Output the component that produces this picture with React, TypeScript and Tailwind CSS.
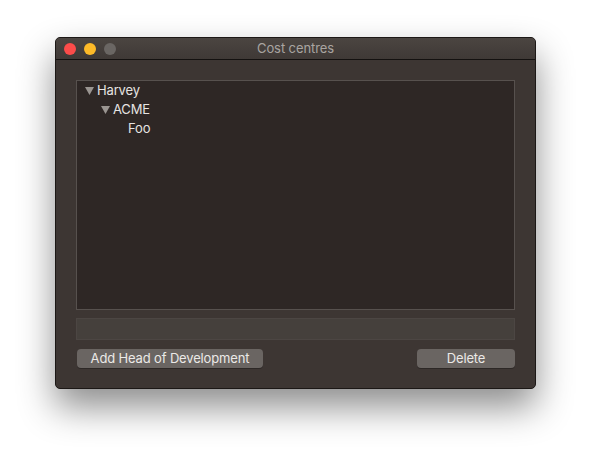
import React from "react";

const font = { fontFamily: '"Inter", "Liberation Sans", sans-serif' };

function Disclosure() {
    return (
        <svg width="9" height="8" viewBox="0 0 9 8" className="shrink-0">
            <path d="M0 0 L9 0 L4.5 8 Z" fill="#9a9591" />
        </svg>
    );
}

export default function App() {
    return (
        <div className="w-[592px] h-[463px] bg-white pl-[55px] pt-[37px]" style={font}>
            <div className="w-[481px] h-[352px] flex flex-col rounded-[5px] border border-[#1c1816] bg-[#3d3633] shadow-[0_18px_36px_rgba(0,0,0,0.45)] overflow-hidden">
                {/* title bar */}
                <div className="relative h-[22px] flex items-center bg-gradient-to-b from-[#4b4541] to-[#3f3936] border-b border-[#141110]">
                    <div className="flex items-center gap-[8px] pl-[8px]">
                        <span className="w-[12px] h-[12px] rounded-full bg-[#fc4c4a]" />
                        <span className="w-[12px] h-[12px] rounded-full bg-[#fdba28]" />
                        <span className="w-[12px] h-[12px] rounded-full bg-[#6a6663]" />
                    </div>
                    <div className="absolute inset-0 flex items-center justify-center text-[13px] tracking-[-0.1px] text-[#a9a5a1]">
                        Cost centres
                    </div>
                </div>

                {/* content */}
                <div className="flex-1 flex flex-col px-[20px] pt-[20px]">
                    <div className="h-[230px] border border-[#57514e] bg-[#2e2725] text-[13px] tracking-[-0.15px] text-[#e6e4e2]">
                        <div className="h-[19px] flex items-center gap-[3px] pl-[8px]">
                            <Disclosure />
                            <span>Harvey</span>
                        </div>
                        <div className="h-[19px] flex items-center gap-[3px] pl-[24px]">
                            <Disclosure />
                            <span>ACME</span>
                        </div>
                        <div className="h-[19px] flex items-center pl-[51px]">
                            <span>Foo</span>
                        </div>
                    </div>

                    <div className="mt-[8px] h-[22px] border border-[#4c4643] bg-[#45403c]" />

                    <div className="mt-[9px] flex justify-between text-[13px] tracking-[-0.15px]">
                        <button className="ml-[1px] w-[186px] h-[19px] rounded-[4px] bg-[#6a6562] leading-none text-[#ebe9e7] shadow-[0_1px_0_rgba(0,0,0,0.25)]">
                            Add Head of Development
                        </button>
                        <button className="w-[98px] h-[19px] rounded-[4px] bg-[#6a6562] leading-none text-[#ebe9e7] shadow-[0_1px_0_rgba(0,0,0,0.25)]">
                            Delete
                        </button>
                    </div>
                </div>
            </div>
        </div>
    );
}
